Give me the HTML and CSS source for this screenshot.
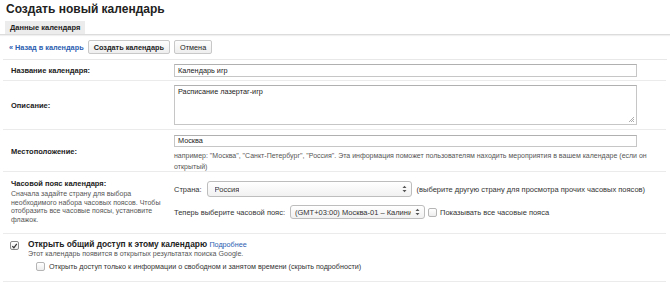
FILE: index.html
```html
<!DOCTYPE html>
<html lang="ru">
<head>
<meta charset="UTF-8" />
<title>Создать новый календарь</title>
<link rel="stylesheet" href="styles.css">
</head>
<body>

<h1 class="page-title">Создать новый календарь</h1>

<div class="tabs">
  <span class="tab">Данные календаря</span>
</div>

<div class="actions">
  <a class="back-link" href="#">« Назад в календарь</a>
  <button class="btn btn-bold">Создать календарь</button>
  <button class="btn">Отмена</button>
</div>

<div class="form-row row-name">
  <div class="row-label">Название календаря:</div>
  <div class="row-field">
    <div class="text-input">Календарь игр</div>
  </div>
</div>

<div class="form-row row-desc">
  <div class="row-label">Описание:</div>
  <div class="row-field">
    <div class="text-area">Расписание лазертаг-игр
      <svg class="resize-grip" width="7" height="7" viewBox="0 0 7 7">
        <path d="M6 1 L1 6 M6 3 L3 6 M6 5 L5 6" stroke="#999" stroke-width="0.8" />
      </svg>
    </div>
  </div>
</div>

<div class="form-row row-place">
  <div class="row-label">Местоположение:</div>
  <div class="row-field">
    <div class="text-input">Москва</div>
    <p class="hint">например: "Москва", "Санкт-Петербург", "Россия". Эта информация поможет пользователям находить мероприятия в вашем календаре (если он открытый)</p>
  </div>
</div>

<div class="form-row row-zone">
  <div class="row-label">
    <b>Часовой пояс календаря:</b>
    <p class="zone-note">Сначала задайте страну для выбора<br>необходимого набора часовых поясов. Чтобы<br>отобразить все часовые поясы, установите<br>флажок.</p>
  </div>
  <div class="row-field zone-field">
    <div class="zone-line">
      <span class="zone-caption">Страна:</span>
      <div class="select select-country">
        <span class="select-value">Россия</span>
        <svg class="select-arrows" width="5" height="8" viewBox="0 0 5 8">
          <path d="M0.5 3 L2.5 0.8 L4.5 3 Z M0.5 5 L2.5 7.2 L4.5 5 Z" fill="#555" />
        </svg>
      </div>
      <span class="zone-aside">(выберите другую страну для просмотра прочих часовых поясов)</span>
    </div>
    <div class="zone-line">
      <span class="zone-caption">Теперь выберите часовой пояс:</span>
      <div class="select select-zone">
        <span class="select-value">(GMT+03:00) Москва-01 – Калини</span>
        <svg class="select-arrows" width="5" height="8" viewBox="0 0 5 8">
          <path d="M0.5 3 L2.5 0.8 L4.5 3 Z M0.5 5 L2.5 7.2 L4.5 5 Z" fill="#555" />
        </svg>
      </div>
      <span class="checkbox"></span>
      <span class="zone-aside">Показывать все часовые пояса</span>
    </div>
  </div>
</div>

<div class="share-row">
  <div class="share-main">
    <span class="checkbox checked">
      <svg width="8" height="8" viewBox="0 0 8 8">
        <path d="M1.5 4.2 L3.3 6 L6.6 1.6" stroke="#333" stroke-width="1.4" fill="none" />
      </svg>
    </span>
    <div>
      <div class="share-title"><b>Открыть общий доступ к этому календарю</b> <a href="#">Подробнее</a></div>
      <div class="share-note">Этот календарь появится в открытых результатах поиска Google.</div>
    </div>
  </div>
  <div class="share-sub">
    <span class="checkbox"></span>
    <span>Открыть доступ только к информации о свободном и занятом времени (скрыть подробности)</span>
  </div>
</div>

</body>
</html>
```

FILE: styles.css
```css
body {
  margin: 0;
  font-family: "Liberation Sans", Arial, sans-serif;
  font-size: 7.5px;
  color: #222;
  background: #fff;
}
p {
  margin: 0;
}

/* Заголовок и вкладка */
.page-title {
  margin: 0;
  padding: 2px 6px 0;
  height: 17px;
  font-size: 12px;
  line-height: 15px;
  font-weight: bold;
  color: #222;
}
.tabs {
  margin-top: 2px;
  padding-left: 5px;
  border-bottom: 1px solid #dcdcdc;
  box-shadow: 0 1px 1px #f0f0f0;
  height: 13px;
}
.tab {
  display: inline-block;
  height: 13px;
  line-height: 13px;
  padding: 0 5px;
  background: #ececec;
  font-weight: bold;
  font-size: 7.5px;
}

/* Кнопки */
.actions {
  display: flex;
  align-items: center;
  gap: 4px;
  height: 24px;
  padding-left: 6px;
  margin: 0 3px;
  border-bottom: 1px solid #e8e8e8;
}
.back-link {
  color: #2a5db0;
  font-weight: bold;
  text-decoration: none;
  font-size: 7.3px;
}
.btn {
  height: 14px;
  padding: 0 5px;
  font-family: inherit;
  font-size: 7.3px;
  color: #222;
  border: 1px solid #c8c8c8;
  border-radius: 2px;
  background: linear-gradient(#fdfdfd, #eeeeee);
}
.btn-bold {
  font-weight: bold;
}

/* Строки формы */
.form-row {
  display: grid;
  grid-template-columns: 171px minmax(0, 1fr);
  margin: 0 4px 0 3px;
  border-bottom: 1px solid #ebebeb;
}
.row-label {
  padding-left: 8px;
  font-weight: bold;
  font-size: 7.5px;
  align-self: center;
}
.row-field {
  padding-right: 29px;
}
.text-input {
  height: 11px;
  line-height: 11px;
  padding-left: 3px;
  border: 1px solid #c6c6c6;
  border-top-color: #b0b0b0;
  font-size: 7.3px;
}
.row-name {
  height: 20px;
}
.row-name .row-field {
  padding-top: 4px;
}
.row-desc {
  height: 48px;
}
.row-desc .row-field {
  padding-top: 4px;
}
.text-area {
  position: relative;
  height: 36px;
  padding: 1px 3px;
  border: 1px solid #c6c6c6;
  border-top-color: #b0b0b0;
  font-size: 7.3px;
}
.resize-grip {
  position: absolute;
  right: 1px;
  bottom: 1px;
}
.row-place {
  height: 41px;
}
.row-place .row-field {
  padding-top: 5px;
}
.row-place .text-input {
  height: 10px;
  line-height: 10px;
}
.hint {
  margin-top: 3px;
  margin-right: -14px;
  color: #555;
  font-size: 7px;
  line-height: 11px;
}

/* Часовой пояс */
.row-zone {
  height: 61px;
}
.row-zone .row-label {
  align-self: start;
  padding-top: 7px;
  font-weight: normal;
}
.row-zone .row-label b {
  font-size: 7.5px;
}
.zone-note {
  margin-top: 2px;
  color: #555;
  font-size: 7px;
  line-height: 8.5px;
}
.zone-field {
  padding-top: 9px;
  display: flex;
  flex-direction: column;
  gap: 8px;
}
.zone-line {
  display: flex;
  align-items: center;
  gap: 5px;
  color: #333;
  white-space: nowrap;
}
.zone-caption {
  width: 28px;
}
.zone-line:last-child .zone-caption {
  width: auto;
}
.select {
  display: flex;
  align-items: center;
  justify-content: space-between;
  height: 14px;
  padding: 0 4px 0 7px;
  border: 1px solid #bdbdbd;
  border-radius: 3px;
  background: linear-gradient(#ffffff, #f1f1f1);
  box-sizing: border-box;
  overflow: hidden;
  flex: none;
}
.select-country {
  width: 205px;
  height: 16px;
}
.select-zone {
  width: 135px;
  padding-left: 4px;
}
.select-value {
  overflow: hidden;
}
.select-arrows {
  flex: none;
  margin-left: 4px;
}
.checkbox {
  display: inline-flex;
  align-items: center;
  justify-content: center;
  width: 7px;
  height: 7px;
  border: 1px solid #b5b5b5;
  border-radius: 2px;
  background: linear-gradient(#fff, #ededed);
  flex: none;
}
.zone-line .checkbox {
  margin-left: -2px;
  margin-right: -2px;
}

/* Общий доступ */
.share-row {
  margin: 0 4px 0 3px;
  height: 47px;
  border-bottom: 1px solid #ebebeb;
}
.share-main {
  display: flex;
  gap: 9px;
  padding: 5px 0 0 7px;
}
.share-main .checkbox {
  margin-top: 2px;
}
.checked {
  border-color: #8a8a8a;
}
.share-title {
  font-size: 8.4px;
}
.share-title a {
  font-size: 7.2px;
  color: #2a5db0;
  text-decoration: none;
}
.share-note {
  margin-top: 1px;
  color: #555;
  font-size: 7.1px;
}
.share-sub {
  display: flex;
  align-items: center;
  gap: 4px;
  padding: 4px 0 0 33px;
  color: #333;
  font-size: 7.2px;
}
```
